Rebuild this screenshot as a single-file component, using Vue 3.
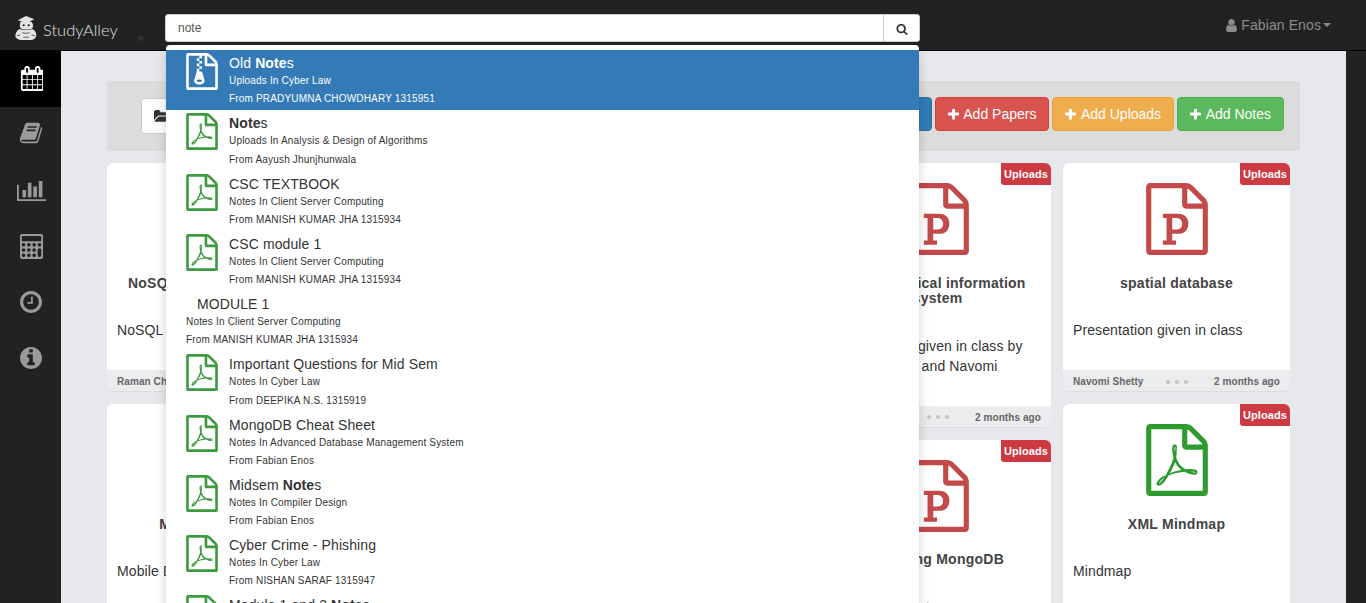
<script setup>
const FILE = 'M1596 380q28 28 48 76t20 88v1152q0 40-28 68t-68 28h-1344q-40 0-68-28t-28-68v-1600q0-40 28-68t68-28h896q40 0 88 20t76 48zm-444-244v376h376q-10-29-22-41l-313-313q-12-12-41-22z'
const icons = {
  pdf: FILE + 'm384 1528v-1024h-416q-40 0-68-28t-28-68v-416h-768v1536h1280zm-514-593q33 26 84 56 59-7 117-7 147 0 177 49 16 22 2 52 0 1-1 2l-2 2v1q-6 38-71 38-48 0-115-20t-130-53q-221 24-392 83-153 262-242 262-15 0-28-7l-24-12q-1-1-6-5-10-10-6-36 9-40 56-91.500t132-96.500q14-9 23 6 2 2 2 4 52-85 107-197 68-136 104-262-24-82-30.500-159.500t6.500-127.500q11-40 42-40h22q23 0 35 15 18 21 9 68-2 6-4 8 1 3 1 8v30q-2 123-14 192 55 164 146 238zm-576 411q52-24 137-158-51 40-87.500 84t-49.500 74zm398-920q-15 42-2 132 1-7 7-44 0-3 7-43 1-4 4-8-1-1-1-2-1-2-1-3-1-22-13-36 0 1-1 2v2zm-124 661q135-54 284-81-2-1-13-9.500t-16-13.500q-76-67-127-176-27 86-83 197-30 56-45 83zm646-16q-24-24-140-24 76 28 124 28 14 0 18-1 0-1-2-3z',
  zip: FILE + 'm384 1528v-1024h-416q-40 0-68-28t-28-68v-416h-128v128h-128v-128h-512v1536h1280zm-627-721l107 349q8 27 8 52 0 83-72.500 137.500t-183.500 54.500-183.500-54.500-72.500-137.500q0-25 8-52 21-63 120-396v-128h128v128h79q22 0 39 13t23 34zm-141 465q53 0 90.500-19t37.500-45-37.500-45-90.500-19-90.500 19-37.500 45 37.500 45 90.500 19zM640 256h128v128h-128zM768 384h128v128h-128zM640 512h128v128h-128zM768 640h128v128h-128z',
  ppt: FILE + 'm384 1528v-1024h-416q-40 0-68-28t-28-68v-416h-768v1536h1280zm-992-234v106h327v-106h-93v-167h137q76 0 118-15 67-23 106.500-87t39.500-146q0-81-37-141t-100-87q-48-19-130-19h-368v104h92v558h-92zM778 1155V872h97q58 0 93 21 56 33 56 122 0 86-59 122-34 18-90 18z'
}
const nav = [
  { vb: '0 0 1664 1792', w: 23, h: 25, lift: 2, d: 'M192 1664h288v-288h-288v288zm352 0h320v-288h-320v288zm-352-352h288v-320h-288v320zm352 0h320v-320h-320v320zm-352-384h288v-288h-288v288zm736 736h320v-288h-320v288zm-384-736h320v-288h-320v288zm768 736h288v-288h-288v288zm-384-352h320v-320h-320v320zm-352-864v-288q0-13-9.500-22.500t-22.500-9.500h-64q-13 0-22.500 9.500t-9.500 22.500v288q0 13 9.500 22.500t22.500 9.500h64q13 0 22.500-9.500t9.500-22.500zm736 864h288v-320h-288v320zm-384-384h320v-288h-320v288zm384 0h288v-288h-288v288zm32-480v-288q0-13-9.500-22.500t-22.500-9.500h-64q-13 0-22.500 9.500t-9.500 22.500v288q0 13 9.500 22.500t22.500 9.500h64q13 0 22.500-9.500t9.500-22.500zm384-64v1280q0 52-38 90t-90 38h-1408q-52 0-90-38t-38-90v-1280q0-52 38-90t90-38h128v-96q0-66 47-113t113-47h64q66 0 113 47t47 113v96h384v-96q0-66 47-113t113-47h64q66 0 113 47t47 113v96h128q52 0 90 38t38 90z', active: true },
  { vb: '0 128 1792 1536', w: 24, h: 22, lift: 4, d: 'M1703 478q40 57 18 129l-275 906q-19 64-76.500 107.500t-122.500 43.500h-923q-77 0-148.500-53.500t-99.500-131.500q-24-67-2-127 0-4 3-27t4-37q1-8-3-21.500t-3-19.500q2-11 8-21t16.500-23.500 16.500-23.500q23-38 45-91.500t30-91.500q3-10 .5-30t-.5-28q3-11 17-28t17-23q21-36 42-92t25-90q1-9-2.500-32t.5-28q4-13 22-30.500t22-22.500q19-26 42.500-84.500t27.500-96.500q1-8-3-25.500t-2-26.500q2-8 9-18t18-23 17-21q8-12 16.500-30.500t15-35 16-36 19.500-32 26.500-23.500 36-11.500 47.500 5.500l-1 3q38-9 51-9h761q74 0 114 56t18 130l-274 906q-36 119-71.500 153.500t-128.500 34.500h-869q-27 0-38 15-11 16-1 43 24 70 144 70h923q29 0 56-15.500t35-41.500l300-987q7-22 5-57 38 15 59 43zm-1064 2q-4 13 2 22.500t20 9.500h608q13 0 25.500-9.500t16.500-22.500l21-64q4-13-2-22.500t-20-9.500h-608q-13 0-25.500 9.500t-16.500 22.500zm-83 256q-4 13 2 22.500t20 9.500h608q13 0 25.500-9.500t16.500-22.500l21-64q4-13-2-22.500t-20-9.500h-608q-13 0-25.500 9.500t-16.500 22.500z' },
  { vb: '0 256 2048 1408', w: 29, h: 20, lift: 0, d: 'M640 896v512h-256v-512h256zm384-512v1024h-256v-1024h256zm1024 1152v128h-2048v-1152h128v1024h1920zm-640-896v768h-256v-768h256zm384-384v1152h-256v-1152h256z' },
  { vb: '0 0 1664 1792', w: 23, h: 25, lift: 2, d: 'M384 1536q0-53-37.500-90.500t-90.500-37.500-90.500 37.500-37.500 90.500 37.500 90.500 90.500 37.500 90.500-37.500 37.500-90.500zm384 0q0-53-37.500-90.500t-90.500-37.500-90.500 37.500-37.500 90.500 37.500 90.500 90.500 37.500 90.500-37.500 37.500-90.500zm-384-384q0-53-37.500-90.500t-90.500-37.500-90.500 37.500-37.500 90.500 37.500 90.500 90.500 37.500 90.500-37.500 37.500-90.500zm768 384q0-53-37.500-90.500t-90.500-37.500-90.500 37.500-37.500 90.500 37.500 90.500 90.500 37.500 90.500-37.500 37.500-90.500zm-384-384q0-53-37.500-90.500t-90.500-37.500-90.500 37.500-37.500 90.500 37.500 90.500 90.500 37.500 90.500-37.500 37.500-90.500zm-384-384q0-53-37.500-90.500t-90.500-37.500-90.500 37.500-37.500 90.500 37.500 90.500 90.500 37.500 90.500-37.500 37.500-90.500zm768 384q0-53-37.500-90.500t-90.500-37.500-90.500 37.500-37.500 90.500 37.500 90.500 90.500 37.500 90.500-37.500 37.500-90.500zm-384-384q0-53-37.500-90.500t-90.500-37.500-90.500 37.500-37.500 90.500 37.500 90.500 90.500 37.500 90.500-37.500 37.500-90.500zm768 768v-384q0-52-38-90t-90-38-90 38-38 90v384q0 52 38 90t90 38 90-38 38-90zm-384-768q0-53-37.500-90.500t-90.500-37.500-90.500 37.500-37.500 90.500 37.500 90.500 90.500 37.500 90.500-37.500 37.500-90.500zm384-320v-256q0-26-19-45t-45-19h-1280q-26 0-45 19t-19 45v256q0 26 19 45t45 19h1280q26 0 45-19t19-45zm0 320q0-53-37.500-90.500t-90.500-37.500-90.500 37.500-37.500 90.500 37.500 90.500 90.500 37.500 90.500-37.500 37.500-90.500zm128-640v1536q0 52-38 90t-90 38h-1408q-52 0-90-38t-38-90v-1536q0-52 38-90t90-38h1408q52 0 90 38t38 90z' },
  { vb: '128 128 1536 1536', w: 22, h: 22, lift: 2, d: 'M1024 544v448q0 14-9 23t-23 9h-320q-14 0-23-9t-9-23v-64q0-14 9-23t23-9h224v-352q0-14 9-23t23-9h64q14 0 23 9t9 23zm416 352q0-148-73-273t-198-198-273-73-273 73-198 198-73 273 73 273 198 198 273 73 273-73 198-198 73-273zm224 0q0 209-103 385.500t-279.500 279.500-385.500 103-385.500-103-279.500-279.500-103-385.500 103-385.500 279.500-279.500 385.500-103 385.500 103 279.500 279.500 103 385.500z' },
  { vb: '128 128 1536 1536', w: 22, h: 22, lift: 2, d: 'M1152 1376v-160q0-14-9-23t-23-9h-96v-512q0-14-9-23t-23-9h-320q-14 0-23 9t-9 23v160q0 14 9 23t23 9h96v320h-96q-14 0-23 9t-9 23v160q0 14 9 23t23 9h448q14 0 23-9t9-23zm-128-896v-160q0-14-9-23t-23-9h-192q-14 0-23 9t-9 23v160q0 14 9 23t23 9h192q14 0 23-9t9-23zm640 416q0 209-103 385.500t-279.500 279.500-385.500 103-385.500-103-279.500-279.500-103-385.500 103-385.500 279.500-279.500 385.500-103 385.500 103 279.500 279.500 103 385.500z' }
]
const plus = 'M1600 736v192q0 40-28 68t-68 28h-416v416q0 40-28 68t-68 28h-192q-40 0-68-28t-28-68v-416h-416q-40 0-68-28t-28-68v-192q0-40 28-68t68-28h416v-416q0-40 28-68t68-28h192q40 0 68 28t28 68v416h416q40 0 68 28t28 68z'
const actions = [
  { label: 'Add Papers', cls: 'red' },
  { label: 'Add Uploads', cls: 'orange' },
  { label: 'Add Notes', cls: 'green' }
]
const results = [
  { pre: 'Old ', hit: 'Note', post: 's', sub: 'Uploads In Cyber Law', from: 'From PRADYUMNA CHOWDHARY 1315951', icon: 'zip', on: true },
  { pre: '', hit: 'Note', post: 's', sub: 'Uploads In Analysis & Design of Algorithms', from: 'From Aayush Jhunjhunwala', icon: 'pdf' },
  { pre: 'CSC TEXTBOOK', hit: '', post: '', sub: 'Notes In Client Server Computing', from: 'From MANISH KUMAR JHA 1315934', icon: 'pdf' },
  { pre: 'CSC module 1', hit: '', post: '', sub: 'Notes In Client Server Computing', from: 'From MANISH KUMAR JHA 1315934', icon: 'pdf' },
  { pre: 'MODULE 1', hit: '', post: '', sub: 'Notes In Client Server Computing', from: 'From MANISH KUMAR JHA 1315934', icon: '' },
  { pre: 'Important Questions for Mid Sem', hit: '', post: '', sub: 'Notes In Cyber Law', from: 'From DEEPIKA N.S. 1315919', icon: 'pdf' },
  { pre: 'MongoDB Cheat Sheet', hit: '', post: '', sub: 'Notes In Advanced Database Management System', from: 'From Fabian Enos', icon: 'pdf' },
  { pre: 'Midsem ', hit: 'Note', post: 's', sub: 'Notes In Compiler Design', from: 'From Fabian Enos', icon: 'pdf' },
  { pre: 'Cyber Crime - Phishing', hit: '', post: '', sub: 'Notes In Cyber Law', from: 'From NISHAN SARAF 1315947', icon: 'pdf' },
  { pre: 'Module 1 and 2 ', hit: 'Note', post: 's', sub: 'Notes In Cyber Law', from: 'From NISHAN SARAF 1315947', icon: 'pdf' }
]
const ppt = (title, desc, by) => ({ icon: 'ppt', title, desc, by })
const columns = [
  [
    ppt('NoSQL Database Overview', 'NoSQL Database Notes', 'Raman Chug'),
    { icon: 'pdf', title: 'Mobile Databases', desc: 'Mobile Databases', by: 'Raman Chug' }
  ],
  [ppt('Data Warehousing', 'Presentation given in class', 'Raman Chug')],
  [ppt('Data Mining', 'Presentation given in class', 'Navomi Shetty')],
  [
    ppt('Geographical information system', 'Presentation given in class by Raman Chug and Navomi', 'Navomi Shetty'),
    ppt('Learning MongoDB', 'Presentation at', 'Navomi Shetty')
  ],
  [
    ppt('spatial database', 'Presentation given in class', 'Navomi Shetty'),
    { icon: 'pdf', title: 'XML Mindmap', desc: 'Mindmap', by: 'Navomi Shetty' }
  ]
]
</script>

<template>
  <div class="app">
    <header class="topbar">
      <div class="brand">
        <svg class="mascot" viewBox="0 0 24 27" width="22" height="26" aria-hidden="true">
          <path class="w" d="M3 5 12 0.500 21 4 13 8z" />
          <path class="w" d="M6 7c3-1.500 8-1.500 12 0 1.500 1.500 2 3.500 1.500 5.500l-1 1.500c-3 1.500-9 1.500-12 0l-1-1.500c-.5-2 0-4 .5-5.500z" />
          <circle cx="9.500" cy="10.500" r="1.200" fill="#222" />
          <circle cx="15" cy="10.500" r="1.200" fill="#222" />
          <path class="w" d="M5 14.500c4 1.500 10 1.500 14 0 3.500 2 5 5.500 4 8.500-1 2-3 3.500-5 3.500H6.500c-2.500 0-5-1.500-6-3.500-.5-3 1-6.500 4.500-8.500z" />
          <path d="M8 18.500c2.500 1 5.500 1 8 0M2 22l4-1M22 22l-4-1M9 23.500h6" stroke="#555" stroke-width="1" fill="none" />
        </svg>
        <span class="brand-name">StudyAlley</span>
        <i class="brand-dot"></i>
      </div>
      <div class="search">
        <div class="search-input">note</div>
        <div class="search-btn">
          <svg viewBox="0 0 1792 1792" width="12" height="12"><path fill="#333" d="M1216 832q0-185-131.500-316.500t-316.500-131.500-316.500 131.500-131.500 316.500 131.500 316.500 316.500 131.500 316.500-131.500 131.500-316.500zm512 832q0 52-38 90t-90 38q-54 0-90-38l-343-342q-179 124-399 124-143 0-273.500-55.500t-225-150-150-225-55.500-273.500 55.500-273.500 150-225 225-150 273.500-55.500 273.500 55.500 225 150 150 225 55.500 273.500q0 220-124 399l343 343q37 37 37 90z" /></svg>
        </div>
      </div>
      <div class="user">
        <svg viewBox="256 128 1280 1536" width="11" height="13"><path fill="currentColor" d="M1536 1399q0 109-62.500 187t-150.500 78h-854q-88 0-150.500-78t-62.500-187q0-85 8.500-160.500t31.500-151.500 58.500-130 94-88.500 134.500-34.500q131 128 313 128t313-128q76 0 134.500 34.500t94 88.500 58.500 130 31.500 151.500 8.500 160.500zm-256-887q0 159-112.500 271.500t-271.500 112.500-271.500-112.500-112.500-271.500 112.500-271.500 271.500-112.500 271.500 112.500 112.500 271.500z" /></svg>
        <span>Fabian Enos</span>
        <i class="caret"></i>
      </div>
    </header>

    <div class="body">
      <nav class="sidebar">
        <div v-for="(n, i) in nav" :key="i" class="nav-item" :class="{ active: n.active }" :style="{ paddingBottom: n.lift + 'px' }">
          <svg :viewBox="n.vb" :width="n.w" :height="n.h"><path fill="currentColor" :d="n.d" /></svg>
        </div>
      </nav>
      <main class="content">
        <section class="toolbar">
          <button class="btn folder">
            <svg viewBox="0 128 1920 1536" width="16" height="13"><path fill="#333" d="M1879 952q0 31-31 66l-336 396q-43 51-120.500 86.500t-143.500 35.500h-1088q-34 0-60.500-13t-26.500-43q0-31 31-66l336-396q43-51 120.500-86.500t143.500-35.500h1088q34 0 60.500 13t26.500 43zm-343-344v160h-832q-94 0-197 47.500t-164 119.500l-337 396-5 6q0-4-.5-12.500t-.500-12.500v-960q0-92 66-158t158-66h320q92 0 158 66t66 158v32h544q92 0 158 66t66 158z" /></svg>
            <span>All Folders</span>
          </button>
          <div class="actions">
            <button class="btn blue">
              <svg viewBox="192 192 1408 1408" width="11" height="11"><path fill="#fff" :d="plus" /></svg>
              <span>Add Folder</span>
            </button>
            <button v-for="a in actions" :key="a.label" class="btn" :class="a.cls">
              <svg viewBox="192 192 1408 1408" width="11" height="11"><path fill="#fff" :d="plus" /></svg>
              <span>{{ a.label }}</span>
            </button>
          </div>
        </section>
        <section class="grid">
          <div v-for="(col, ci) in columns" :key="ci" class="col">
            <article v-for="c in col" :key="c.title" class="card">
              <span class="badge">Uploads</span>
              <svg class="big-icon" :class="c.icon" viewBox="128 0 1536 1792" width="62" height="72"><path fill="currentColor" :d="icons[c.icon]" /></svg>
              <h3 class="card-title">{{ c.title }}</h3>
              <p class="card-desc">{{ c.desc }}</p>
              <footer class="card-foot">
                <span>{{ c.by }}</span>
                <span class="dots"><i></i><i></i><i></i></span>
                <span>2 months ago</span>
              </footer>
            </article>
          </div>
        </section>
      </main>
    </div>

    <div class="dropdown">
      <div v-for="r in results" :key="r.pre + r.sub + r.from" class="result" :class="{ on: r.on }">
        <svg v-if="r.icon" class="res-icon" viewBox="128 0 1536 1792" width="32" height="37"><path fill="currentColor" :d="icons[r.icon]" /></svg>
        <div class="res-text" :class="{ plain: !r.icon }">
          <div class="res-title">{{ r.pre }}<strong v-if="r.hit">{{ r.hit }}</strong>{{ r.post }}</div>
          <div class="res-sub">{{ r.sub }}</div>
          <div class="res-sub from">{{ r.from }}</div>
        </div>
      </div>
    </div>
  </div>
</template>

<style>
html, body { margin: 0; height: 100%; overflow: hidden; background: #222; }
</style>

<style scoped>
.app { position: relative; height: 603px; overflow: hidden; font-family: "Liberation Sans", Arial, sans-serif; color: #333; background: #222; display: flex; flex-direction: column; }
.topbar { height: 50px; flex: none; display: flex; align-items: flex-start; background: #222; border-bottom: 1px solid #000; }
.brand { position: relative; width: 165px; flex: none; display: flex; align-items: flex-start; height: 50px; padding: 15px 0 0 15px; box-sizing: border-box; }
.mascot { flex: none; }
.w { fill: #e4e4e4; }
.brand-name { margin-left: 6px; margin-top: 5px; font-family: Lato, sans-serif; font-weight: 300; font-size: 16.500px; line-height: 20px; color: #e0e0e0; }
.brand-dot { position: absolute; left: 138px; top: 36px; width: 5px; height: 5px; border-radius: 50%; background: #343434; }
.search { margin-top: 14px; display: flex; width: 755px; height: 28px; }
.search-input { flex: 1; box-sizing: border-box; background: #fff; border: 1px solid #ccc; border-radius: 3px 0 0 3px; padding: 0 12px; font-size: 12px; line-height: 26px; color: #555; }
.search-btn { width: 37px; flex: none; box-sizing: border-box; margin-left: -1px; background: #fff; border: 1px solid #ccc; border-radius: 0 3px 3px 0; display: flex; align-items: center; justify-content: center; padding-top: 2px; }
.user { margin-left: auto; margin-right: 35px; margin-top: 17px; display: flex; align-items: center; color: #8c8c8c; font-size: 14px; line-height: 16px; }
.user span { margin-left: 4px; letter-spacing: .1px; }
.caret { margin-left: 2px; border-top: 4px solid #8c8c8c; border-left: 4px solid transparent; border-right: 4px solid transparent; }

.body { flex: 1; display: flex; min-height: 0; }
.sidebar { width: 61px; flex: none; background: #222; color: #9a9a9a; }
.nav-item { height: 56px; box-sizing: border-box; padding-left: 1px; display: flex; align-items: center; justify-content: center; }
.nav-item.active { background: #000; color: #fff; }
.content { flex: 1; margin-right: 20px; background: #e7e8eb; padding: 30px 46px 0; overflow: hidden; min-width: 0; }
.toolbar { height: 70px; box-sizing: border-box; background: #dcdcdc; border-radius: 4px; display: flex; align-items: flex-start; justify-content: space-between; padding: 16px 16px 0 34px; }
.actions { display: flex; gap: 3px; }
.btn { height: 34px; box-sizing: border-box; border: 1px solid transparent; border-radius: 4px; padding: 0 12px; font: 14px/20px "Liberation Sans", Arial, sans-serif; color: #fff; display: flex; align-items: center; gap: 4.500px; }
.folder { background: #fff; border-color: #ccc; color: #333; height: 36px; margin-top: 1px; }
.blue { background: #337ab7; border-color: #2e6da4; }
.red { background: #d9534f; border-color: #d43f3a; }
.orange { background: #f0ad4e; border-color: #eea236; }
.green { background: #5cb85c; border-color: #4cae4c; }

.grid { display: flex; gap: 12px; margin-top: 12px; }
.col { width: 227px; flex: none; display: flex; flex-direction: column; gap: 12px; }
.card { position: relative; background: #fff; border-radius: 6px; padding-top: 20px; display: flex; flex-direction: column; }
.badge { position: absolute; top: 0; right: 0; width: 50px; height: 22px; box-sizing: border-box; background: #cd3a42; color: #fff; font-size: 11px; font-weight: 700; letter-spacing: .12px; line-height: 22px; text-align: center; border-radius: 0 6px 0 3px; }
.big-icon { align-self: center; flex: none; }
.big-icon.ppt { color: #c34a4a; }
.big-icon.pdf { color: #2f9a2f; }
.card-title { margin: 20.800px 0 28.800px; padding: 0 10px; font-size: 14px; line-height: 15.500px; font-weight: 700; letter-spacing: .25px; color: #444; text-align: center; }
.card-desc { margin: 0; padding: 0 10px 30px; font-size: 14px; line-height: 20px; letter-spacing: .11px; color: #333; }
.card-foot { height: 22px; box-sizing: border-box; padding: 2px 10px 0; background: #ececee; border-bottom: 1px solid #dcdcdc; border-radius: 0 0 6px 6px; display: flex; align-items: center; justify-content: space-between; font-size: 10px; font-weight: 700; letter-spacing: .08px; color: #666; }
.dots { display: flex; gap: 5px; margin-left: -3px; }
.dots i { width: 4px; height: 4px; border-radius: 50%; background: #c4c4c4; }

.dropdown { position: absolute; left: 166px; top: 45px; width: 753px; height: 600px; background: #fff; border-radius: 4px 4px 0 0; padding-top: 5px; box-shadow: 0 6px 12px rgba(0, 0, 0, .175); }
.result { height: 60.250px; box-sizing: border-box; padding: 4.200px 20px 0; display: flex; gap: 11px; color: #333; }
.result.on { background: #337ab7; color: #fff; }
.res-icon { flex: none; color: #3d9a40; margin-top: -1.200px; }
.on .res-icon { color: #fff; }
.res-text.plain .res-title { margin-left: 11px; }
.res-title { font-size: 14px; line-height: 18px; letter-spacing: .11px; }
.res-sub { font-size: 10px; line-height: 17px; letter-spacing: .18px; }
.res-sub.from { line-height: 18px; margin-top: 1.200px; }
</style>
